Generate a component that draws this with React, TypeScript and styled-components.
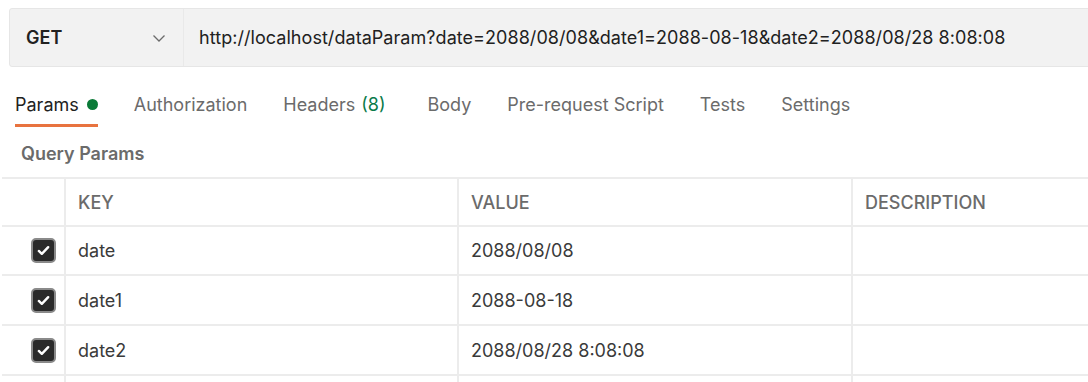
import styled, { createGlobalStyle } from 'styled-components';

const GlobalStyle = createGlobalStyle`
  html, body {
    margin: 0;
    padding: 0;
    background: #ffffff;
    font-family: Inter, "Noto Sans", sans-serif;
    overflow: hidden;
  }
`;

const Page = styled.div`
  width: 1088px;
  height: 382px;
  overflow: hidden;
  padding-top: 8px;
  box-sizing: border-box;
`;

const UrlBar = styled.div`
  display: flex;
  height: 59px;
  margin-left: 9px;
  width: 1100px;
  background: #f2f2f2;
  border: 1px solid #e6e6e6;
  border-radius: 3px;
  box-sizing: border-box;
`;

const MethodBox = styled.div`
  width: 174px;
  display: flex;
  align-items: center;
  justify-content: space-between;
  padding: 0 17px 0 16px;
  box-sizing: border-box;
  border-right: 1px solid #e9e9e9;
  font-size: 18px;
  font-weight: 600;
  color: #212121;
`;

const UrlText = styled.div`
  display: flex;
  align-items: center;
  padding-left: 15px;
  font-size: 18px;
  color: #212121;
  letter-spacing: 0.05px;
  white-space: nowrap;
`;

const Tabs = styled.div`
  display: flex;
  margin-top: 18px;
  padding-left: 15px;
`;

const Tab = styled.div<{ $active?: boolean; $gap?: number }>`
  display: flex;
  align-items: center;
  height: 42px;
  margin-right: ${(p) => p.$gap ?? 36}px;
  font-size: 18px;
  white-space: nowrap;
  color: ${(p) => (p.$active ? '#212121' : '#6b6b6b')};
  border-bottom: 3px solid ${(p) => (p.$active ? '#e8733f' : 'transparent')};
  box-sizing: border-box;
`;

const Dot = styled.span`
  width: 11px;
  height: 11px;
  border-radius: 50%;
  background: #0a7a37;
  margin-left: 8px;
`;

const Count = styled.span`
  color: #0a7a4a;
  margin-left: 6px;
`;

const SectionTitle = styled.div`
  display: flex;
  align-items: center;
  height: 50px;
  padding: 2px 0 0 21px;
  box-sizing: border-box;
  font-size: 18px;
  font-weight: 600;
  color: #6b6b6b;
`;

const Table = styled.div`
  margin-left: 2px;
  border-top: 2px solid #ececec;
`;

const Row = styled.div<{ $height: number }>`
  display: grid;
  grid-template-columns: 62px 393px 394px 240px;
  height: ${(p) => p.$height}px;
  border-bottom: 2px solid #ececec;
  box-sizing: border-box;
`;

const Cell = styled.div<{ $head?: boolean }>`
  display: flex;
  align-items: center;
  padding-left: 12px;
  border-left: 2px solid #ececec;
  font-size: 18px;
  font-weight: ${(p) => (p.$head ? 500 : 400)};
  color: ${(p) => (p.$head ? '#6b6b6b' : '#3a3a3a')};
  white-space: nowrap;
`;

const CheckCell = styled.div`
  display: flex;
  align-items: center;
  padding-left: 29px;
`;

const Check = styled.div`
  width: 25px;
  height: 25px;
  border-radius: 5px;
  background: #2a2a2a;
  border: 2px solid #8a8a8a;
  box-sizing: border-box;
  display: flex;
  align-items: center;
  justify-content: center;
`;

const Chevron = () => (
  <svg width="14" height="14" viewBox="0 0 14 14" fill="none" stroke="#6b6b6b" strokeWidth="1.3">
    <path d="M1.5 4.5l5.5 5.5l5.5-5.5" />
  </svg>
);

const Tick = () => (
  <svg width="15" height="15" viewBox="0 0 16 16" fill="none" stroke="#fff" strokeWidth="2.6" strokeLinecap="round" strokeLinejoin="round">
    <path d="M3 8.5l3.2 3L13 4.5" />
  </svg>
);

const params = [
  { key: 'date', value: '2088/08/08', height: 49 },
  { key: 'date1', value: '2088-08-18', height: 50 },
  { key: 'date2', value: '2088/08/28 8:08:08', height: 50 },
];

export default function App() {
  return (
    <Page>
      <GlobalStyle />
      <UrlBar>
        <MethodBox>
          GET
          <Chevron />
        </MethodBox>
        <UrlText>http://localhost/dataParam?date=2088/08/08&amp;date1=2088-08-18&amp;date2=2088/08/28 8:08:08</UrlText>
      </UrlBar>
      <Tabs>
        <Tab $active>
          Params
          <Dot />
        </Tab>
        <Tab>Authorization</Tab>
        <Tab $gap={42}>
          Headers<Count>(8)</Count>
        </Tab>
        <Tab>Body</Tab>
        <Tab>Pre-request Script</Tab>
        <Tab>Tests</Tab>
        <Tab>Settings</Tab>
      </Tabs>
      <SectionTitle>Query Params</SectionTitle>
      <Table>
        <Row $height={48}>
          <CheckCell />
          <Cell $head>KEY</Cell>
          <Cell $head>VALUE</Cell>
          <Cell $head>DESCRIPTION</Cell>
        </Row>
        {params.map((p) => (
          <Row key={p.key} $height={p.height}>
            <CheckCell>
              <Check>
                <Tick />
              </Check>
            </CheckCell>
            <Cell>{p.key}</Cell>
            <Cell>{p.value}</Cell>
            <Cell />
          </Row>
        ))}
        <Row $height={50}>
          <CheckCell />
          <Cell />
          <Cell />
          <Cell />
        </Row>
      </Table>
    </Page>
  );
}
